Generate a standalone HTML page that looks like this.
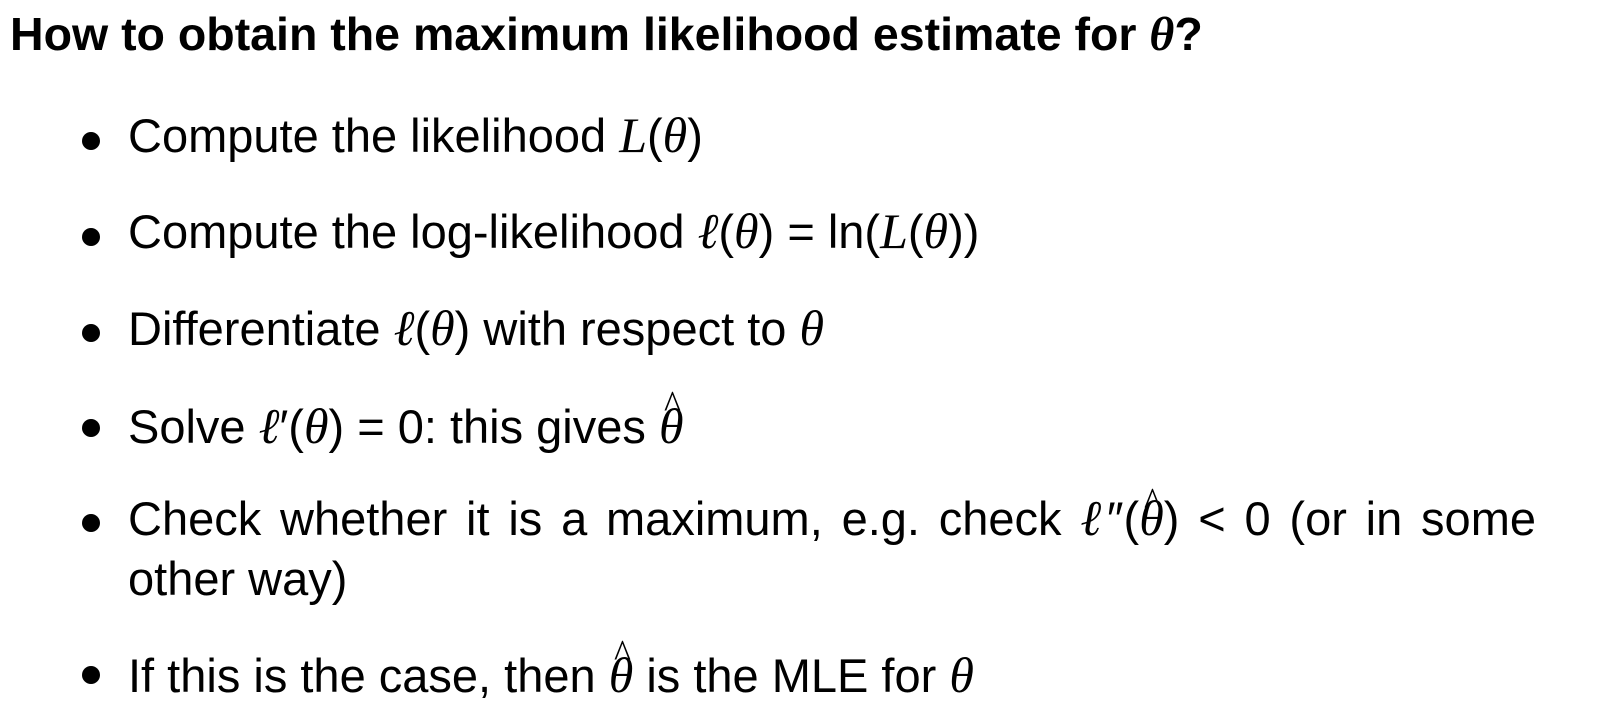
<!DOCTYPE html>
<html><head><meta charset="utf-8"><style>
body{margin:0;width:1600px;height:719px;background:#fff;color:#000;font-family:"Liberation Sans",sans-serif;overflow:hidden;position:relative}
.t{position:absolute;left:10px;top:11px;font-size:46.5px;font-weight:bold;white-space:nowrap;line-height:1}
.l{position:absolute;left:128px;font-size:47px;white-space:nowrap;line-height:1}
.b{position:absolute;left:82px;width:18px;height:18px;border-radius:50%;background:#000}
i{font-family:"Liberation Serif",serif;font-size:50px}
.h{position:relative;display:inline-block}
.h:after{content:"^";position:absolute;left:4px;top:-16px;font-style:normal;font-size:40px;transform:scaleX(0.9)}
.j{white-space:normal;text-align:justify;text-align-last:left;line-height:60px}
</style></head><body>
<div class="t">How to obtain the maximum likelihood estimate for <i style="font-size:48px">θ</i>?</div>
<div class="b" style="top:132px"></div><div class="l" style="top:110px">Compute the likelihood <i>L</i>(<i>θ</i>)</div>
<div class="b" style="top:228px"></div><div class="l" style="top:206px">Compute the log-likelihood <i>ℓ</i>(<i>θ</i>) = ln(<i>L</i>(<i>θ</i>))</div>
<div class="b" style="top:324px"></div><div class="l" style="top:303px">Differentiate <i>ℓ</i>(<i>θ</i>) with respect to <i>θ</i></div>
<div class="b" style="top:419px"></div><div class="l" style="top:401px">Solve <i>ℓ</i>′(<i>θ</i>) = 0: this gives <i class="h">θ</i></div>
<div class="b" style="top:514px"></div><div class="l j" style="top:488px;width:1408px">Check whether it is a maximum, e.g. check <i>ℓ</i>″(<i class="h">θ</i>) &lt; 0 (or in some other way)</div>
<div class="b" style="top:666px"></div><div class="l" style="top:650px">If this is the case, then <i class="h">θ</i> is the MLE for <i>θ</i></div>
</body></html>
